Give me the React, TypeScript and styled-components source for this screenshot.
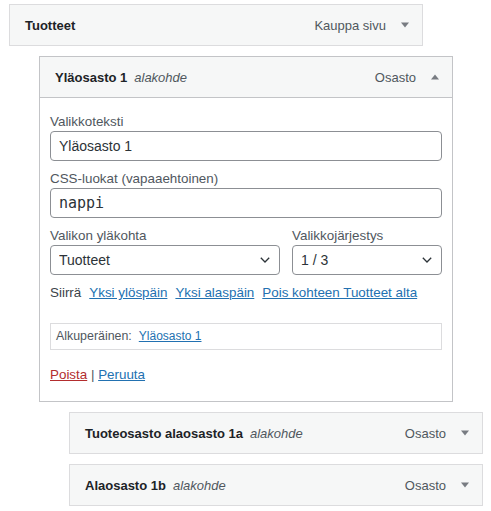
import React from "react";
import styled, { createGlobalStyle } from "styled-components";

const GlobalStyle = createGlobalStyle`
  html, body { margin: 0; padding: 0; background: #ffffff; }
  body { font-family: "Liberation Sans", Arial, sans-serif; color: #3c434a; }
  * { box-sizing: border-box; }
`;

const Page = styled.div`
  padding: 4px 0 0 9px;
`;

const Item = styled.div<{ $depth: number }>`
  width: 414px;
  margin-left: ${(p) => p.$depth * 30}px;
  margin-top: 10px;
  &:first-child { margin-top: 0; }
`;

const Handle = styled.div<{ $active?: boolean }>`
  display: flex;
  align-items: center;
  height: 42px;
  padding: 0 10px 0 15px;
  background: #f6f7f7;
  border: 1px solid ${(p) => (p.$active ? "#c3c4c7" : "#dcdcde")};
`;

const Title = styled.span`
  font-size: 13px;
  font-weight: 700;
  color: #1d2327;
  white-space: nowrap;
`;

const Sub = styled.span`
  font-size: 13px;
  font-style: italic;
  font-weight: 400;
  color: #50575e;
  margin-left: 7px;
`;

const Controls = styled.div`
  margin-left: auto;
  display: flex;
  align-items: center;
  gap: 12px;
`;

const TypeLabel = styled.span`
  font-size: 13px;
  color: #50575e;
`;

const Toggle = styled.span`
  width: 14px;
  height: 14px;
  display: flex;
  align-items: center;
  justify-content: center;
`;

const Settings = styled.div`
  border: 1px solid #c3c4c7;
  border-top: none;
  padding: 15px 10px 17px;
`;

const Field = styled.label<{ $flush?: boolean }>`
  display: block;
  margin-top: ${(p) => (p.$flush ? 0 : 9)}px;
`;

const LabelText = styled.span`
  display: block;
  font-size: 13.4px;
  line-height: 18px;
  color: #50575e;
`;

const TextInput = styled.input<{ $mono?: boolean }>`
  display: block;
  width: 100%;
  height: 30px;
  margin: 0;
  padding: 0 8px;
  border: 1px solid #8c8f94;
  border-radius: 4px;
  background: #fff;
  color: #2c3338;
  font-family: ${(p) => (p.$mono ? '"DejaVu Sans Mono", monospace' : '"Liberation Sans", Arial, sans-serif')};
  font-size: ${(p) => (p.$mono ? "15px" : "14px")};
  outline: none;
`;

const SelectRow = styled.div`
  display: grid;
  grid-template-columns: 230px 1fr;
  gap: 12px;
  margin-top: 9px;
`;

const SelectWrap = styled.div`
  position: relative;
`;

const Select = styled.select`
  display: block;
  width: 100%;
  height: 30px;
  margin: 0;
  padding: 0 24px 0 8px;
  border: 1px solid #8c8f94;
  border-radius: 4px;
  background: #fff;
  color: #2c3338;
  font-family: "Liberation Sans", Arial, sans-serif;
  font-size: 14px;
  appearance: none;
  -webkit-appearance: none;
  outline: none;
`;

const Chevron = styled.svg`
  position: absolute;
  right: 10px;
  top: 50%;
  margin-top: -3px;
  pointer-events: none;
`;

const MoveRow = styled.div`
  display: flex;
  gap: 8px;
  margin-top: 9px;
  font-size: 13.4px;
  line-height: 18px;
  color: #3c434a;
`;

const Link = styled.a<{ $danger?: boolean }>`
  color: ${(p) => (p.$danger ? "#b32d2e" : "#2271b1")};
  text-decoration: underline;
  cursor: pointer;
`;

const Original = styled.div`
  margin-top: 21px;
  border: 1px solid #dcdcde;
  padding: 3px 5px 4px;
  font-size: 12.4px;
  line-height: 18px;
  color: #50575e;
  background: #fff;
`;

const OriginalLink = styled(Link)`
  margin-left: 7px;
  font-size: 12px;
`;

const Actions = styled.div`
  margin-top: 16px;
  font-size: 13.4px;
  line-height: 18px;
  color: #50575e;
`;

const Arrow = ({ up }: { up?: boolean }) => (
  <svg width="8" height="6" viewBox="0 0 8 6">
    <polygon points={up ? "0,5.5 4,0.5 8,5.5" : "0,0.5 8,0.5 4,5.5"} fill="#787c82" />
  </svg>
);

type MenuEntry = { title: string; sub?: string; type: string; depth: number };

const entries: MenuEntry[] = [
  { title: "Tuotteet", type: "Kauppa sivu", depth: 0 },
  { title: "Yläosasto 1", sub: "alakohde", type: "Osasto", depth: 1 },
  { title: "Tuoteosasto alaosasto 1a", sub: "alakohde", type: "Osasto", depth: 2 },
  { title: "Alaosasto 1b", sub: "alakohde", type: "Osasto", depth: 2 },
];

const ChevronIcon = () => (
  <Chevron width="10" height="6" viewBox="0 0 10 6">
    <path d="M0.8 0.8 L5 5 L9.2 0.8" fill="none" stroke="#2c3338" strokeWidth="1.3" />
  </Chevron>
);

const EditPanel = () => (
  <Settings>
    <Field $flush>
      <LabelText>Valikkoteksti</LabelText>
      <TextInput defaultValue="Yläosasto 1" />
    </Field>
    <Field>
      <LabelText>CSS-luokat (vapaaehtoinen)</LabelText>
      <TextInput $mono defaultValue="nappi" />
    </Field>
    <SelectRow>
      <Field as="div" $flush>
        <LabelText>Valikon yläkohta</LabelText>
        <SelectWrap>
          <Select defaultValue="tuotteet">
            <option value="tuotteet">Tuotteet</option>
          </Select>
          <ChevronIcon />
        </SelectWrap>
      </Field>
      <Field as="div" $flush>
        <LabelText>Valikkojärjestys</LabelText>
        <SelectWrap>
          <Select defaultValue="1">
            <option value="1">1 / 3</option>
          </Select>
          <ChevronIcon />
        </SelectWrap>
      </Field>
    </SelectRow>
    <MoveRow>
      <span>Siirrä</span>
      <Link>Yksi ylöspäin</Link>
      <Link>Yksi alaspäin</Link>
      <Link>Pois kohteen Tuotteet alta</Link>
    </MoveRow>
    <Original>
      Alkuperäinen:<OriginalLink>Yläosasto 1</OriginalLink>
    </Original>
    <Actions>
      <Link $danger>Poista</Link> | <Link>Peruuta</Link>
    </Actions>
  </Settings>
);

export default function App() {
  return (
    <>
      <GlobalStyle />
      <Page>
        {entries.map((e, i) => {
          const active = i === 1;
          return (
            <Item key={e.title} $depth={e.depth}>
              <Handle $active={active}>
                <Title>{e.title}</Title>
                {e.sub && <Sub>{e.sub}</Sub>}
                <Controls>
                  <TypeLabel>{e.type}</TypeLabel>
                  <Toggle>
                    <Arrow up={active} />
                  </Toggle>
                </Controls>
              </Handle>
              {active && <EditPanel />}
            </Item>
          );
        })}
      </Page>
    </>
  );
}
